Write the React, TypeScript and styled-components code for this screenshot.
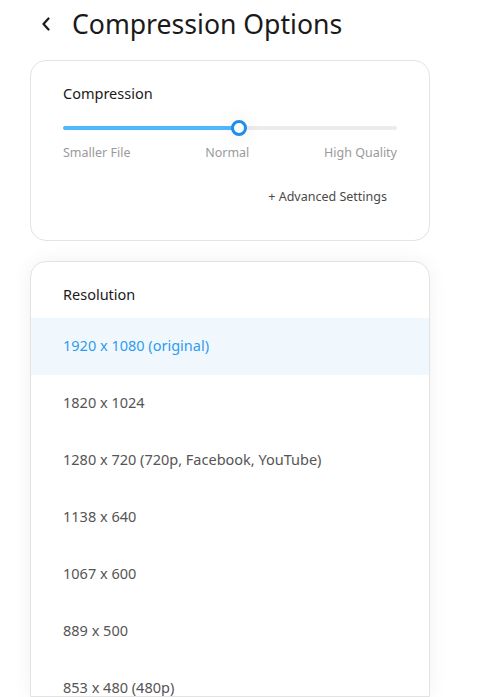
import React from "react";
import styled, { createGlobalStyle } from "styled-components";

const Global = createGlobalStyle`
  html, body { margin: 0; padding: 0; background: #ffffff; }
  body { font-family: "Noto Sans", "Open Sans", sans-serif; overflow: hidden; }
`;

const Page = styled.div`
  width: 487px;
  height: 697px;
  overflow: hidden;
  padding: 0 57px 0 30px;
  box-sizing: border-box;
  display: flex;
  flex-direction: column;
`;

const Header = styled.div`
  display: flex;
  align-items: center;
  height: 48px;
  gap: 19px;
  padding-left: 9px;
`;

const BackButton = styled.button`
  border: none;
  background: none;
  padding: 0;
  width: 14px;
  height: 18px;
  display: flex;
  align-items: center;
  justify-content: center;
  color: #1a1a1a;
  cursor: pointer;
`;

const Title = styled.h1`
  margin: 0;
  font-size: 26.6px;
  font-weight: 400;
  color: #1a1a1a;
`;

const Card = styled.div<{ $shadow?: boolean }>`
  border: 1px solid #e3e3e3;
  border-radius: 16px;
  background: #fff;
  box-shadow: ${(p) => (p.$shadow ? "0 0 20px rgba(0,0,0,0.06)" : "none")};
  overflow: hidden;
`;

const CompressionCard = styled(Card)`
  margin-top: 12px;
  padding: 22px 32px 34px 32px;
  display: flex;
  flex-direction: column;
`;

const Label = styled.div`
  font-size: 14.5px;
  color: #1a1a1a;
  line-height: 20px;
`;

const Track = styled.div`
  position: relative;
  margin-top: 23px;
  height: 4px;
  border-radius: 2px;
  background: #ececec;
`;

const Fill = styled.div`
  height: 100%;
  border-radius: 2px;
  background: #50b8fc;
`;

const Thumb = styled.div`
  position: absolute;
  top: 50%;
  width: 16px;
  height: 16px;
  box-sizing: border-box;
  border: 3px solid #1c8ef0;
  border-radius: 50%;
  background: #fff;
  transform: translate(-50%, -50%);
  box-shadow: 0 0 12px 8px rgba(0,0,0,0.025);
`;

const Ticks = styled.div`
  display: flex;
  justify-content: space-between;
  margin-top: 14px;
  font-size: 12.5px;
  color: #9a9a9a;
  line-height: 18px;
`;

const Advanced = styled.button`
  align-self: flex-end;
  margin-top: 26px;
  margin-right: 10px;
  border: none;
  background: none;
  padding: 0;
  font-family: inherit;
  font-size: 12.5px;
  color: #4a4a4a;
  line-height: 18px;
  cursor: pointer;
`;

const ResolutionCard = styled(Card)`
  margin-top: 20px;
  border-bottom-left-radius: 0;
  border-bottom-right-radius: 0;
  flex: 1;
`;

const ResHeader = styled.div`
  padding: 22px 32px 14px 32px;
  font-size: 14.5px;
  color: #1a1a1a;
  line-height: 20px;
`;

const Row = styled.div<{ $selected?: boolean }>`
  height: 57px;
  box-sizing: border-box;
  display: flex;
  align-items: center;
  padding: 0 32px 3px 32px;
  font-size: 14.5px;
  color: ${(p) => (p.$selected ? "#2f9bf0" : "#555555")};
  background: ${(p) => (p.$selected ? "#f0f8fe" : "transparent")};
`;

const options = [
  "1920 x 1080 (original)",
  "1820 x 1024",
  "1280 x 720 (720p, Facebook, YouTube)",
  "1138 x 640",
  "1067 x 600",
  "889 x 500",
  "853 x 480 (480p)",
];

export default function App() {
  const value = 52.8;
  return (
    <>
      <Global />
      <Page>
        <Header>
          <BackButton aria-label="Back">
            <svg width="10" height="14" viewBox="0 0 10 14" fill="none">
              <path d="M7.5 1.5L2.5 7l5 5.5" stroke="currentColor" strokeWidth="2.2" strokeLinecap="round" strokeLinejoin="round" />
            </svg>
          </BackButton>
          <Title>Compression Options</Title>
        </Header>
        <CompressionCard>
          <Label>Compression</Label>
          <Track>
            <Fill style={{ width: `${value}%` }} />
            <Thumb style={{ left: `${value}%` }} />
          </Track>
          <Ticks>
            <span>Smaller File</span>
            <span>Normal</span>
            <span>High Quality</span>
          </Ticks>
          <Advanced>+ Advanced Settings</Advanced>
        </CompressionCard>
        <ResolutionCard $shadow>
          <ResHeader>Resolution</ResHeader>
          {options.map((o, i) => (
            <Row key={o} $selected={i === 0}>{o}</Row>
          ))}
        </ResolutionCard>
      </Page>
    </>
  );
}
